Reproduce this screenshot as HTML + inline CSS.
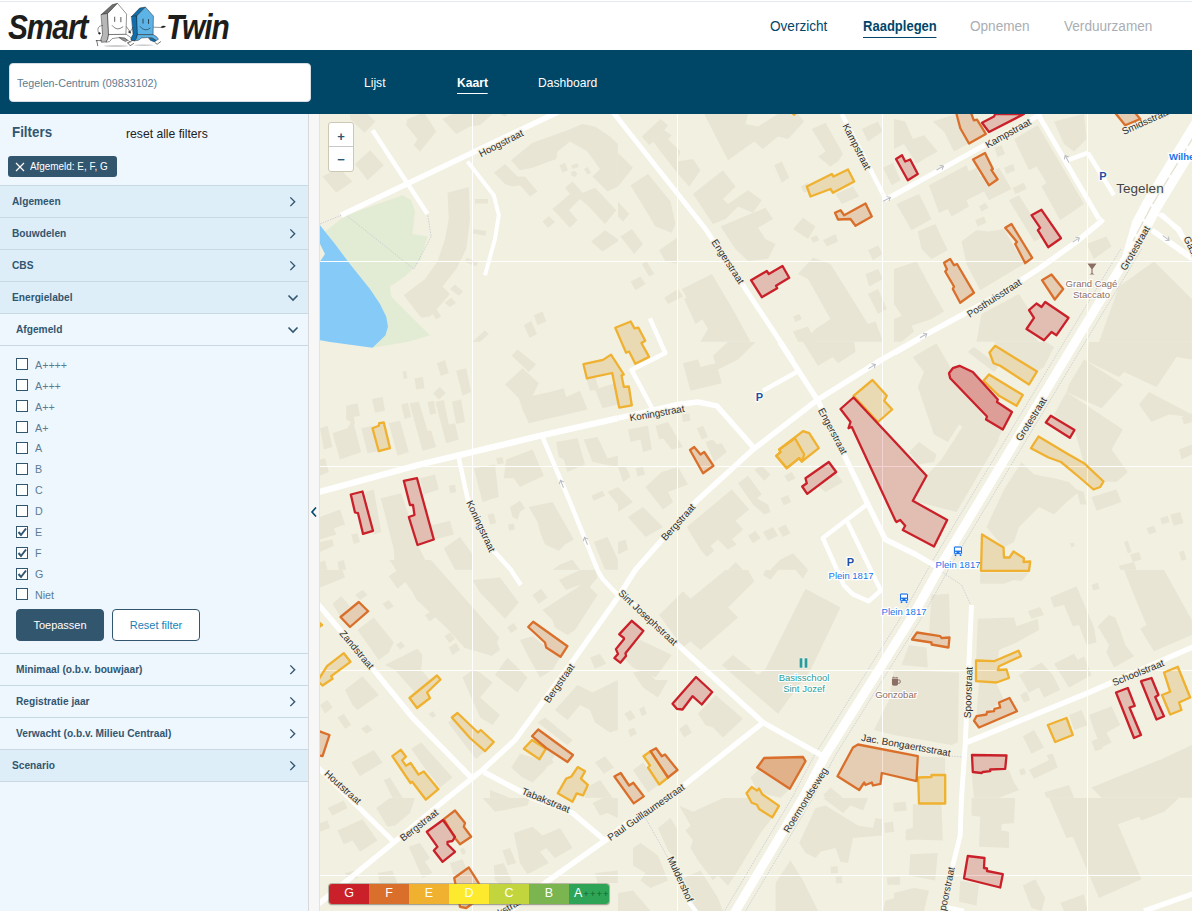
<!DOCTYPE html>
<html lang="nl">
<head>
<meta charset="utf-8">
<title>Smart Twin</title>
<style>
*{box-sizing:border-box;margin:0;padding:0}
html,body{width:1192px;height:911px;overflow:hidden;background:#fff;font-family:"Liberation Sans",sans-serif;color:#33566f}
#top{position:absolute;left:0;top:0;width:1192px;height:50px;background:linear-gradient(to bottom,#fff 0,#fff 1px,#e3eaf2 1px,#e3eaf2 2px,#fff 2px)}
#logo{position:absolute;left:8px;top:5px;height:46px;width:230px}
#logo span{position:absolute;top:2.5px;font-size:34.5px;font-weight:bold;font-style:italic;color:#1d1d1b;letter-spacing:-1.2px;transform-origin:0 50%;transform:scaleX(.865);white-space:nowrap}
#nav a{position:absolute;top:18px;font-size:14px;color:#00466a;white-space:nowrap;transform-origin:0 50%;transform:scaleX(.97)}
#nav a.act{font-weight:bold;border-bottom:1.5px solid #00466a;padding-bottom:3px;transform:scaleX(.93)}
#nav a.dis{color:#aaaeb3}
#bar{position:absolute;left:0;top:50px;width:1192px;height:64px;background:#004666}
#search{position:absolute;left:9px;top:12.5px;width:302px;height:39px;background:#fff;border-radius:4px;border:1px solid #d5dde3;font-size:11px;color:#5c7c92;line-height:38px;padding-left:8px}
#search span{display:inline-block;transform-origin:0 50%;transform:scaleX(.975);margin-left:-1px}
#tabs a{position:absolute;top:25px;font-size:13px;color:#fff;white-space:nowrap;transform-origin:0 50%;transform:scaleX(.93)}
#tabs a.act{font-weight:bold;border-bottom:1.5px solid #fff;padding-bottom:2.5px}
#side{position:absolute;left:0;top:114px;width:309px;height:797px;background:#eef6fe;border-right:1px solid #dfe3e6}
#grip{position:absolute;left:308px;top:114px;width:12px;height:797px;background:#f7f7f7;border-left:1px solid #d6d8da;border-right:1px solid #e3e3e0}
#fh{position:absolute;left:12px;top:9px;font-size:15px;font-weight:bold;color:#33566f;transform-origin:0 50%;transform:scaleX(.89)}
#ra{position:absolute;left:126px;top:12px;font-size:13.5px;color:#222;transform-origin:0 50%;transform:scaleX(.9);white-space:nowrap}
#chip{position:absolute;left:8px;top:42px;width:109px;height:21px;background:#33566f;border-radius:3px;color:#fff;font-size:11px;line-height:21px;white-space:nowrap}
#chip span{position:absolute;left:22px;top:0;transform-origin:0 50%;transform:scaleX(.9)}
.row{position:absolute;left:0;width:308px;height:32px;border-top:1px solid #c9d9e4;font-size:11.5px;font-weight:bold;color:#33566f;line-height:31px;padding-left:12px;background:#deeef9}
.row.sub{background:#eef6fe;padding-left:16px}
.row b{display:inline-block;transform-origin:0 50%;transform:scaleX(.885);white-space:nowrap}
.row svg{position:absolute;right:12px;top:10px}
.cb{position:absolute;left:16px;width:12px;height:12px;border:1px solid #33566f;background:#fff}
.cl{position:absolute;left:35px;font-size:11.5px;color:#5c7c92;line-height:14px;transform-origin:0 50%;transform:scaleX(.93)}
.btn{position:absolute;top:495px;height:32px;width:88px;border-radius:4px;font-size:11px;line-height:30px;text-align:center;border:1px solid #33566f}
#map{position:absolute;left:320px;top:114px;width:872px;height:797px;background:#f2efe0;overflow:hidden}
#zoom{position:absolute;left:8px;top:8px;width:26px;height:50px;background:#fff;border:1px solid #cdc8b6;border-radius:3px;color:#33566f;font-size:13px;font-weight:bold;text-align:center}
#zoom div{height:24px;line-height:25px}
#legend{position:absolute;left:9px;top:770px;width:280px;height:20px;border-radius:3px;overflow:hidden;box-shadow:0 0 0 1px rgba(130,130,115,.5),0 1px 2px rgba(0,0,0,.25)}
#legend div{float:left;width:40px;height:20px;color:#fff;font-size:12.5px;line-height:19px;text-align:center}
</style>
</head>
<body>
<div id="top">
  <div id="logo">
    <span style="left:0">Smart</span>
    <span style="left:157.5px">Twin</span>
    <!--LOGO--><svg style="position:absolute;left:82px;top:-5px" width="80" height="52" viewBox="0 0 1192 775">
<ellipse cx="390" cy="685" rx="185" ry="11" fill="#888" opacity=".55"/><ellipse cx="800" cy="672" rx="150" ry="9" fill="#888" opacity=".55"/>
<g stroke="#1d1d1b" stroke-width="7" stroke-linejoin="round" stroke-linecap="round">
<polygon points="170,215 330,70 410,50 265,200" fill="#6f6f6f"/>
<polygon points="170,215 265,200 280,515 265,580 240,625 170,630 160,590 185,520" fill="#b7b7b7"/>
<polygon points="280,515 535,510 590,545 640,600 600,625 560,600 520,570 440,560 330,575 290,620 240,630 265,580" fill="#fff"/>
<polygon points="265,200 410,50 545,210 535,510 280,515" fill="#fff"/>
<polygon points="440,562 520,570 560,600 530,620 490,600" fill="#9a9a9a"/>
<path d="M368,255V320M460,260V325" stroke-width="11" fill="none"/>
<path d="M330,380Q400,475 490,400" fill="none" stroke-width="8"/>
<path d="M185,380C120,380 100,440 130,490" fill="none"/><circle cx="140" cy="497" r="13" fill="#1d1d1b"/>
<path d="M545,400L600,480" fill="none"/><path d="M575,480l30,15l-10,-30z" fill="#1d1d1b"/>
<path d="M92,605H165M100,605L115,682" fill="none" stroke-width="9"/>
<path d="M565,640L598,682L650,648" fill="none" stroke-width="9"/>
<polygon points="620,245 740,120 825,105 700,235" fill="#0f6fae"/>
<polygon points="620,245 700,235 710,515 690,580 660,610 610,600 615,560 640,515" fill="#0f6fae"/>
<polygon points="710,515 940,515 990,545 1020,585 985,605 930,570 860,560 770,565 720,600 660,610 690,580" fill="#5db3e6"/>
<polygon points="880,565 930,570 985,605 960,625 900,600" fill="#0f6fae"/>
<polygon points="700,235 825,105 945,240 940,515 710,515" fill="#5db3e6"/>
<path d="M790,285V345M872,290V350" stroke-width="11" fill="none"/>
<path d="M745,395Q820,485 895,420" fill="none" stroke-width="8"/>
<path d="M950,405L1060,410" fill="none"/><ellipse cx="1090" cy="400" rx="30" ry="11" fill="#1d1d1b" transform="rotate(-12 1090 400)"/>
<path d="M640,410L600,470" fill="none"/>
<path d="M975,640L1000,660L1052,622" fill="none" stroke-width="9"/>
<path d="M600,625L560,640" fill="none" stroke-width="9"/>
</g></svg>
<!--/LOGO-->
  </div>
  <div id="nav">
    <a style="left:770px">Overzicht</a>
    <a class="act" style="left:863px">Raadplegen</a>
    <a class="dis" style="left:970px">Opnemen</a>
    <a class="dis" style="left:1064px">Verduurzamen</a>
  </div>
</div>
<div id="bar">
  <div id="search"><span>Tegelen-Centrum (09833102)</span></div>
  <div id="tabs">
    <a style="left:364px">Lijst</a>
    <a class="act" style="left:457px">Kaart</a>
    <a style="left:538px">Dashboard</a>
  </div>
</div>
<div id="side">
  <div id="fh">Filters</div>
  <div id="ra">reset alle filters</div>
  <div id="chip"><svg width="10" height="10" viewBox="0 0 10 10" style="position:absolute;left:7px;top:6px"><path d="M1 1L9 9M9 1L1 9" stroke="#fff" stroke-width="1.2" fill="none"/></svg><span>Afgemeld: E, F, G</span></div>
  <!--ROWS-->
<div class="row" style="top:71px"><b>Algemeen</b><svg width="7" height="11.5" viewBox="0 0 8 13"><path d="M1.5 1.5L6.5 6.5L1.5 11.5" stroke="#33566f" stroke-width="1.6" fill="none"/></svg></div>
<div class="row" style="top:103px"><b>Bouwdelen</b><svg width="7" height="11.5" viewBox="0 0 8 13"><path d="M1.5 1.5L6.5 6.5L1.5 11.5" stroke="#33566f" stroke-width="1.6" fill="none"/></svg></div>
<div class="row" style="top:135px"><b>CBS</b><svg width="7" height="11.5" viewBox="0 0 8 13"><path d="M1.5 1.5L6.5 6.5L1.5 11.5" stroke="#33566f" stroke-width="1.6" fill="none"/></svg></div>
<div class="row" style="top:167px"><b>Energielabel</b><svg width="12" height="8" viewBox="0 0 12 8" style="top:12px;right:9px"><path d="M1.5 1.5L6 6L10.5 1.5" stroke="#33566f" stroke-width="1.6" fill="none"/></svg></div>
<div class="row sub" style="top:199px"><b>Afgemeld</b><svg width="12" height="8" viewBox="0 0 12 8" style="top:12px;right:9px"><path d="M1.5 1.5L6 6L10.5 1.5" stroke="#33566f" stroke-width="1.6" fill="none"/></svg></div>
<div class="row sub" style="top:539px"><b>Minimaal (o.b.v. bouwjaar)</b><svg width="7" height="11.5" viewBox="0 0 8 13"><path d="M1.5 1.5L6.5 6.5L1.5 11.5" stroke="#33566f" stroke-width="1.6" fill="none"/></svg></div>
<div class="row sub" style="top:571px"><b>Registratie jaar</b><svg width="7" height="11.5" viewBox="0 0 8 13"><path d="M1.5 1.5L6.5 6.5L1.5 11.5" stroke="#33566f" stroke-width="1.6" fill="none"/></svg></div>
<div class="row sub" style="top:603px"><b>Verwacht (o.b.v. Milieu Centraal)</b><svg width="7" height="11.5" viewBox="0 0 8 13"><path d="M1.5 1.5L6.5 6.5L1.5 11.5" stroke="#33566f" stroke-width="1.6" fill="none"/></svg></div>
<div class="row" style="top:635px"><b>Scenario</b><svg width="7" height="11.5" viewBox="0 0 8 13"><path d="M1.5 1.5L6.5 6.5L1.5 11.5" stroke="#33566f" stroke-width="1.6" fill="none"/></svg></div>
<div style="position:absolute;left:0;top:231px;width:308px;height:1px;background:#c9d9e4"></div>
<div style="position:absolute;left:0;top:667px;width:308px;height:1px;background:#c9d9e4"></div>
<div class="cb" style="top:244.2px"></div><div class="cl" style="top:243.7px">A++++</div>
<div class="cb" style="top:265.1px"></div><div class="cl" style="top:264.6px">A+++</div>
<div class="cb" style="top:286.1px"></div><div class="cl" style="top:285.6px">A++</div>
<div class="cb" style="top:307.0px"></div><div class="cl" style="top:306.5px">A+</div>
<div class="cb" style="top:327.9px"></div><div class="cl" style="top:327.4px">A</div>
<div class="cb" style="top:348.9px"></div><div class="cl" style="top:348.4px">B</div>
<div class="cb" style="top:369.8px"></div><div class="cl" style="top:369.3px">C</div>
<div class="cb" style="top:390.7px"></div><div class="cl" style="top:390.2px">D</div>
<div class="cb" style="top:411.6px"><svg width="10" height="10" viewBox="0 0 10 10" style="position:absolute;left:0;top:0"><path d="M1.5 5L4 8L9 1.5" stroke="#33566f" stroke-width="2" fill="none"/></svg></div><div class="cl" style="top:411.1px">E</div>
<div class="cb" style="top:432.6px"><svg width="10" height="10" viewBox="0 0 10 10" style="position:absolute;left:0;top:0"><path d="M1.5 5L4 8L9 1.5" stroke="#33566f" stroke-width="2" fill="none"/></svg></div><div class="cl" style="top:432.1px">F</div>
<div class="cb" style="top:453.5px"><svg width="10" height="10" viewBox="0 0 10 10" style="position:absolute;left:0;top:0"><path d="M1.5 5L4 8L9 1.5" stroke="#33566f" stroke-width="2" fill="none"/></svg></div><div class="cl" style="top:453.0px">G</div>
<div class="cb" style="top:474.4px"></div><div class="cl" style="top:473.9px">Niet</div>
<div class="btn" style="left:16px;background:#33566f;color:#fff">Toepassen</div>
<div class="btn" style="left:112px;background:#fff;color:#1a7fb5">Reset filter</div>
<!--/ROWS-->
</div>
<div id="grip"><svg width="8" height="12" viewBox="0 0 8 12" style="position:absolute;left:1px;top:392px"><path d="M6 1.5L2 6L6 10.5" stroke="#00466a" stroke-width="1.6" fill="none"/></svg></div>
<div id="map">
<!--MAP-->
<svg id="mapsvg" width="872" height="797" viewBox="0 0 872 797" style="position:absolute;left:0;top:0;font-family:'Liberation Sans',sans-serif">
<rect width="872" height="797" fill="#f2f0e0"/>
<g fill="#e2ecd4"><polygon points="5.0,117.5 26.2,101.2 82.5,81.2 91.2,86.2 95.0,97.5 92.5,120.0 107.5,122.5 100.0,147.5 85.0,162.5 70.0,172.5 71.2,182.5 110.0,221.2 87.5,228.0 52.5,233.8 68.0,212.5 50.0,175.0"/></g>
<g fill="#86cbf8"><polygon points="0.0,111.2 15.0,130.0 30.0,150.0 50.0,175.0 60.0,190.0 66.2,202.5 68.0,212.5 65.5,221.2 58.8,227.8 52.5,233.8 10.0,228.0 0.0,226.2 0.0,147.5 5.0,140.0 0.0,130.0"/></g>
<g fill="#e8e5d5"><polygon points="30.0,0.0 47.5,0.0 55.5,7.5 44.5,18.8 30.0,5.0"/><polygon points="87.5,5.0 100.0,0.0 105.0,0.0 116.2,17.5 100.0,37.5 93.8,31.2 97.5,25.0 86.2,11.2"/><polygon points="122.5,5.0 132.5,0.0 172.5,0.0 160.0,11.2 150.0,12.5 136.2,20.0"/><polygon points="35.0,50.0 50.0,36.2 63.8,51.2 47.5,66.2"/><polygon points="2.5,62.5 18.8,53.8 32.5,67.5 16.2,78.8"/><polygon points="191.2,46.2 212.5,28.8 247.5,16.2 262.5,10.0 275.0,12.5 290.0,22.5 297.8,30.0 297.8,72.5 287.5,77.5 272.5,62.5 280.0,55.0 267.5,37.5 250.0,27.5 237.5,37.5 236.2,45.0 212.5,53.8 200.0,56.2"/><polygon points="173.8,58.8 185.0,50.0 197.5,62.5 205.0,62.5 217.5,77.5 210.0,82.5 200.0,71.2 192.5,72.5 185.0,70.0"/><polygon points="232.5,95.0 250.0,80.0 245.0,73.8 252.5,67.5 262.5,78.8 275.0,73.8 296.2,96.2 285.0,110.0 268.8,92.5 260.0,85.0 248.8,96.2 257.5,106.2 250.0,113.8"/><polygon points="271.2,127.5 285.0,116.2 297.8,125.0 297.8,127.5 282.5,137.5"/><polygon points="222.5,107.5 228.8,102.0 235.0,108.0 228.0,113.8"/><polygon points="239.5,51.2 245.0,48.8 248.0,56.2 242.5,58.8"/><polygon points="251.2,51.2 257.5,49.2 258.8,53.0 252.5,55.0"/><polygon points="251.2,58.0 255.0,57.0 257.5,60.0 255.0,63.0 251.5,62.0"/><polygon points="263.8,55.0 267.5,53.0 271.2,58.8 267.5,60.5"/><polygon points="127.5,78.8 148.8,73.0 150.0,105.0 146.2,135.0 136.2,155.0 122.5,172.5 130.0,180.0 110.0,202.5 101.2,203.8 83.8,181.2 105.0,165.0 117.5,147.5 125.0,125.0 128.8,105.0"/><polygon points="155.0,85.0 168.0,85.0 168.0,89.5 155.0,89.5"/><polygon points="153.8,115.0 166.2,117.0 165.5,121.8 153.0,119.5"/><polygon points="146.2,143.8 158.0,148.0 156.5,152.5 145.0,148.0"/><polygon points="130.0,175.0 135.0,170.5 143.0,177.5 138.8,181.8"/><polygon points="124.5,188.8 131.2,183.8 136.2,188.8 130.0,193.0"/><polygon points="110.0,196.2 115.0,193.0 121.2,202.5 116.2,205.5"/><polygon points="213.8,201.2 222.5,197.5 226.2,207.5 217.5,211.2"/><polygon points="203.8,211.2 211.2,207.0 217.0,220.0 209.5,223.8"/><polygon points="152.5,227.8 165.0,216.2 168.8,220.0 160.0,227.8"/><polygon points="180.0,0.0 187.5,0.0 185.0,3.0"/><polygon points="321.8,22.5 340.5,5.0 348.0,11.2 344.2,16.2 351.8,21.2 345.5,27.5 339.2,22.5 329.2,31.2"/><polygon points="333.0,27.5 343.0,20.0 360.5,37.5 356.8,47.5 373.0,45.0 380.5,56.2 369.2,72.5 358.0,60.0"/><polygon points="310.5,71.2 328.0,60.0 350.5,87.5 355.5,110.0 351.8,118.8 335.5,112.5 328.0,100.0"/><polygon points="298.0,38.8 313.0,53.8 298.0,72.5"/><polygon points="298.0,87.5 309.2,100.0 303.0,107.5 298.0,102.5"/><polygon points="300.5,122.5 311.8,115.0 323.0,130.0 314.2,140.0"/><polygon points="339.2,136.2 356.8,123.8 358.0,150.0 345.5,147.5"/><polygon points="384.2,0.0 428.0,0.0 425.5,10.0 438.0,12.5 458.0,0.0 478.0,0.0 484.2,7.5 468.0,25.0 458.0,22.5 443.0,35.0 434.2,27.5 408.0,46.2"/><polygon points="491.8,15.0 505.5,8.8 523.0,40.0 518.0,47.5 510.5,52.5 498.0,42.5 505.5,37.5"/><polygon points="454.2,51.2 461.8,47.5 469.2,63.8 461.8,68.8"/><polygon points="373.0,80.0 403.0,56.2 415.5,72.5 403.0,85.0 408.0,90.0 428.0,76.2 441.8,86.2 433.0,98.8 418.0,92.5 405.5,105.0 393.0,110.0"/><polygon points="400.5,112.5 433.0,98.8 445.5,93.8 453.0,105.0 438.0,113.8 445.5,125.0 455.5,130.0 448.0,145.0 428.0,147.0 415.5,135.0"/><polygon points="473.0,115.0 483.0,103.8 495.5,112.5 488.0,125.0"/><polygon points="503.0,126.2 515.5,120.0 518.0,127.5 506.8,132.5"/><polygon points="490.5,123.8 496.8,121.2 499.2,126.2 493.0,128.8"/><polygon points="361.8,175.0 391.8,160.0 415.5,200.0 430.5,227.8 380.5,227.8 388.0,215.0 378.0,197.5 370.5,190.0"/><polygon points="478.0,160.0 493.0,143.8 510.5,150.0 548.0,210.0 555.5,207.5 563.0,227.8 483.0,227.8 495.5,215.0 510.5,205.0 488.0,165.0"/><polygon points="548.0,136.2 558.0,131.2 562.5,140.0 553.0,146.2"/><polygon points="541.8,15.0 558.0,7.5 562.5,17.5 548.0,27.5"/><polygon points="563.0,53.8 573.0,48.8 580.5,66.2 571.8,71.2"/><polygon points="515.5,80.0 533.0,72.5 539.2,82.5 521.8,90.0"/><polygon points="545.5,160.0 558.0,155.0 563.0,165.0 549.2,172.5"/><polygon points="548.0,180.0 558.0,175.0 566.8,195.0 558.0,200.0"/><polygon points="310.5,167.5 320.5,162.5 325.5,170.0 315.5,176.2"/><polygon points="321.8,150.0 326.8,147.5 334.2,160.0 329.2,162.5"/><polygon points="344.2,183.8 358.0,175.0 363.0,182.5 348.0,190.0"/><polygon points="364.2,185.0 370.5,181.2 383.0,205.0 375.5,210.0"/><polygon points="473.0,202.5 479.2,200.0 481.8,205.0 475.5,208.0"/><polygon points="473.0,217.5 488.0,212.5 495.5,227.8 478.0,227.8"/><polygon points="480.5,72.5 488.0,68.8 491.8,75.0 484.2,78.8"/><polygon points="574.0,5.0 585.2,7.5 592.8,25.0 604.0,21.2 617.8,37.5 604.0,45.0 596.5,50.0 584.0,30.0 574.0,35.0"/><polygon points="612.8,7.5 636.5,0.0 640.2,13.8 649.0,29.5 634.0,37.5 624.0,17.5"/><polygon points="694.0,25.0 717.8,11.2 764.0,90.0 740.2,106.2 721.5,72.5 726.5,68.8 716.5,52.5 709.0,56.2"/><polygon points="674.0,33.8 681.5,31.2 685.2,40.0 677.8,43.0"/><polygon points="684.0,53.8 692.8,50.0 695.2,56.2 686.5,60.0"/><polygon points="692.8,73.8 704.0,68.8 706.5,75.0 695.2,80.0"/><polygon points="609.0,71.2 646.5,51.2 649.0,57.5 656.5,53.8 660.2,62.5 679.0,53.8 691.5,75.0 669.0,86.2 664.0,77.5 646.5,86.2 649.0,92.5 631.5,102.5 627.8,95.0 619.0,98.8"/><polygon points="659.0,92.5 665.2,88.8 668.5,93.8 661.5,97.5"/><polygon points="655.2,106.2 664.0,102.5 666.5,108.8 657.8,112.5"/><polygon points="576.5,90.0 599.0,80.0 611.5,105.0 591.5,116.2"/><polygon points="597.8,117.5 615.2,110.0 627.8,136.2 611.5,145.0 601.5,135.0"/><polygon points="641.5,127.5 656.5,116.2 669.0,117.5 684.0,115.0 704.0,150.0 660.2,176.2 646.5,150.0"/><polygon points="689.0,86.2 699.0,81.2 714.0,105.0 724.0,122.5 714.0,127.5"/><polygon points="574.0,155.0 596.5,147.5 614.0,180.0 624.0,197.5 611.5,205.0 589.0,212.5 574.0,190.0"/><polygon points="734.0,7.5 764.0,0.0 766.5,25.0 754.0,37.5 744.0,30.0"/><polygon points="766.5,130.0 786.5,122.5 791.5,132.5 774.0,145.0"/><polygon points="799.0,172.5 834.0,147.5 871.8,185.0 871.8,227.8 779.0,227.8"/><polygon points="661.5,200.0 699.0,180.0 714.0,203.8 706.5,215.0 719.0,227.8 656.5,227.8"/><polygon points="574.0,205.0 586.5,200.0 594.0,217.5 581.5,227.8 574.0,227.8"/><polygon points="116.8,249.2 125.0,246.0 128.8,259.2 120.8,261.8"/><polygon points="82.5,258.0 86.2,256.8 87.5,264.2 83.8,265.0"/><polygon points="94.5,264.2 103.0,263.0 104.5,274.2 96.2,275.5"/><polygon points="113.0,279.2 120.0,273.0 125.8,279.2 118.8,285.5"/><polygon points="136.2,256.8 146.2,254.2 151.2,278.0 142.5,281.8"/><polygon points="52.0,285.0 62.5,283.0 65.0,296.8 55.0,298.8"/><polygon points="26.2,291.8 37.5,289.2 40.0,301.8 33.8,303.0 35.0,310.5 26.2,305.5"/><polygon points="81.2,290.5 88.0,288.8 91.2,303.0 84.5,305.0"/><polygon points="89.5,289.2 98.8,287.5 107.5,316.8 111.2,316.8 116.2,333.0 102.5,336.8"/><polygon points="107.5,288.0 113.8,286.8 116.2,299.2 110.0,301.0"/><polygon points="115.5,288.0 123.8,286.0 128.8,310.5 135.0,309.2 138.8,325.5 126.2,329.2"/><polygon points="132.0,287.5 141.2,285.5 145.0,308.0 136.2,310.0"/><polygon points="0.0,314.2 7.5,311.8 12.5,333.0 3.8,335.5"/><polygon points="12.5,319.2 27.5,314.2 32.5,305.5 41.2,338.0 20.0,345.5"/><polygon points="41.2,314.2 52.5,311.8 58.8,337.2 47.5,339.2"/><polygon points="68.8,309.2 80.0,306.8 88.8,338.0 77.5,341.8"/><polygon points="0.0,345.5 5.0,344.2 8.8,358.0 0.0,361.8"/><polygon points="191.8,241.8 197.5,235.5 216.2,250.5 208.8,258.0"/><polygon points="185.0,270.5 202.5,254.2 218.8,269.2 212.5,281.8 230.0,278.0 243.8,274.2 246.2,283.0 260.0,276.8 267.5,295.5 208.8,309.2 202.5,295.5 198.8,284.2"/><polygon points="266.2,264.2 275.0,261.8 278.8,275.5 270.0,276.8"/><polygon points="275.0,275.5 295.0,269.2 297.8,290.5 282.5,294.2"/><polygon points="236.2,328.0 257.5,324.2 265.0,350.5 247.5,358.0 243.8,345.5 238.8,343.0"/><polygon points="263.8,325.5 277.5,323.0 287.5,344.2 297.8,341.8 297.8,353.0 272.5,348.0"/><polygon points="176.2,344.2 182.5,343.0 183.8,349.2 177.5,350.5"/><polygon points="186.2,345.5 212.5,335.5 223.8,361.8 200.0,373.0 193.8,364.2 183.8,364.2"/><polygon points="153.8,354.2 175.0,350.5 178.8,383.0 162.5,388.0"/><polygon points="100.0,364.2 115.0,360.5 118.8,375.5 103.8,380.5"/><polygon points="128.8,371.8 135.0,370.5 136.2,378.0 130.0,379.2"/><polygon points="45.0,378.0 53.8,375.5 61.2,418.0 53.8,420.5"/><polygon points="60.8,384.2 81.2,379.2 100.0,435.5 110.0,455.8 75.0,455.8 73.8,435.5"/><polygon points="110.0,411.8 130.0,406.8 133.8,420.5 115.0,425.5"/><polygon points="0.0,403.0 20.0,395.5 25.0,410.5 13.8,414.2 16.2,420.5 0.0,425.5"/><polygon points="0.0,428.0 12.5,425.5 13.8,431.8 0.0,438.0"/><polygon points="31.2,420.5 37.5,419.2 40.0,428.0 33.8,430.0"/><polygon points="17.5,448.0 23.8,446.0 26.2,455.8 18.8,455.8"/><polygon points="0.0,448.0 5.0,446.8 7.5,455.8 0.0,455.8"/><polygon points="123.8,434.2 140.0,423.0 152.5,440.5 152.5,455.8 135.0,455.8"/><polygon points="190.0,393.0 200.0,386.8 205.0,394.2 200.0,398.0 197.5,405.5 192.5,403.0"/><polygon points="208.8,393.0 232.5,388.0 253.8,425.5 245.0,430.5 238.8,436.8 225.0,430.5 220.0,418.0 217.5,408.0"/><polygon points="167.5,400.5 173.8,399.2 176.2,409.2 170.0,410.5"/><polygon points="188.0,410.5 193.8,409.2 195.0,415.5 189.2,416.8"/><polygon points="271.2,381.8 282.5,376.8 285.0,381.8 273.8,386.8"/><polygon points="287.5,378.0 297.8,373.0 297.8,390.5"/><polygon points="273.8,428.0 287.5,423.0 297.8,445.5 297.8,455.8 285.0,455.8"/><polygon points="232.5,455.8 240.0,450.5 252.5,445.5 260.0,455.8"/><polygon points="363.0,249.2 378.0,245.5 380.5,253.0 395.5,249.2 393.0,241.8 408.0,228.0 435.5,228.0 418.0,245.5 398.0,255.5 401.8,269.2 370.5,276.8"/><polygon points="483.0,228.0 534.2,228.0 535.5,238.0 518.0,249.2 513.0,243.0 498.0,251.8"/><polygon points="308.0,315.5 328.0,311.8 331.8,335.5 323.0,338.0 320.5,325.5 310.5,328.0"/><polygon points="335.5,311.8 348.0,308.0 356.8,323.0 363.0,333.0 351.8,335.5 343.0,324.2 339.2,325.5"/><polygon points="361.8,300.5 369.2,299.2 370.5,306.8 363.0,308.0"/><polygon points="376.8,314.2 383.0,311.8 388.0,323.0 381.8,325.5"/><polygon points="385.5,328.0 393.0,325.5 396.8,330.5 401.8,329.2 406.8,338.0 394.2,348.0"/><polygon points="298.0,353.0 305.5,351.8 310.5,363.0 303.0,368.0"/><polygon points="315.5,354.2 323.0,353.0 325.0,360.5 317.5,362.5"/><polygon points="341.8,358.0 358.0,353.0 368.0,370.5 348.0,378.0 353.0,388.0 343.0,395.5 325.5,373.0"/><polygon points="298.0,373.0 313.0,388.0 298.0,398.0"/><polygon points="308.0,403.0 323.0,393.0 343.0,413.0 325.5,423.0"/><polygon points="434.2,355.5 441.8,351.8 450.5,360.5 444.2,366.8"/><polygon points="418.0,369.2 428.0,361.8 441.8,380.5 436.8,384.2 448.0,390.5 450.5,398.0 444.2,400.5 433.0,390.5"/><polygon points="464.2,361.8 471.8,358.0 475.5,364.2 468.0,368.0"/><polygon points="460.5,384.2 468.0,381.0 471.2,388.0 463.8,391.2"/><polygon points="495.5,370.5 515.5,358.0 523.0,368.0 505.5,378.0"/><polygon points="366.8,413.0 411.8,375.5 429.2,395.5 415.5,406.8 423.0,415.5 411.8,425.5 416.8,430.5 408.0,435.5 398.0,425.5 390.5,431.8 394.2,436.8 386.8,443.0 380.5,435.5"/><polygon points="428.0,421.8 435.5,416.8 440.5,424.2 433.0,429.2"/><polygon points="443.0,418.0 453.0,413.0 458.0,421.8 448.0,426.8"/><polygon points="458.0,414.2 465.5,410.5 470.5,419.2 463.0,423.0"/><polygon points="408.0,455.8 415.5,448.0 423.0,455.8"/><polygon points="450.5,455.8 460.5,445.5 473.0,439.2 488.0,455.8"/><polygon points="298.0,428.0 305.5,425.5 308.0,435.5 298.0,440.5"/><polygon points="592.8,243.0 616.5,229.2 631.5,255.5 664.0,303.0 682.8,315.5 674.0,333.0 639.0,310.5 627.8,328.0 614.0,320.5 597.8,273.0 604.0,258.0"/><polygon points="647.8,238.0 654.0,233.0 679.0,251.8 674.0,258.0"/><polygon points="589.0,338.0 599.0,328.0 616.5,340.5 614.0,348.0 599.0,350.5"/><polygon points="621.5,345.5 644.0,310.5 679.0,325.5 636.5,398.0 592.8,386.8 606.5,361.8"/><polygon points="674.0,228.0 726.5,228.0 734.0,233.0 724.0,253.0 717.0,257.5 679.0,233.0"/><polygon points="769.0,228.0 871.8,228.0 871.8,245.5 856.5,243.0 836.5,273.0 804.0,258.0 799.0,263.0 766.5,246.8"/><polygon points="749.0,270.5 764.0,245.5 802.8,270.5 781.5,294.2 746.5,278.0"/><polygon points="819.0,290.5 829.0,278.0 871.8,300.5 871.8,303.0 849.0,300.5 831.5,308.0"/><polygon points="861.5,303.0 871.8,299.2 871.8,308.0 864.0,310.5"/><polygon points="859.0,335.5 871.8,330.5 871.8,340.5 861.5,345.5"/><polygon points="734.0,300.5 746.5,278.0 802.8,315.5 791.5,335.5 807.8,358.0 796.5,368.0 783.5,367.5 764.0,349.2 754.5,316.0"/><polygon points="684.0,375.5 701.5,348.0 714.0,360.5 734.0,364.2 749.0,368.0 759.0,378.0 746.5,388.0 734.0,400.5 719.0,393.0 709.0,403.0 699.0,413.0 694.0,428.0 683.5,433.5 666.5,413.0"/><polygon points="771.5,383.0 796.5,375.5 801.5,388.0 776.5,396.8"/><polygon points="756.5,375.5 764.0,378.0 766.5,390.5 760.2,390.5"/><polygon points="840.2,404.2 847.8,401.8 849.5,408.0 842.0,410.5"/><polygon points="850.2,400.5 860.2,398.0 863.5,409.2 853.5,411.8"/><polygon points="826.5,414.2 834.0,411.8 836.5,418.0 829.0,420.5"/><polygon points="804.0,428.0 807.8,426.8 811.5,438.0 807.8,439.2"/><polygon points="810.2,440.5 819.0,438.0 821.5,445.5 812.8,448.0"/><polygon points="859.0,438.0 864.0,436.8 866.5,445.5 861.5,446.8"/><polygon points="799.0,451.8 814.0,448.0 816.5,455.8 800.2,455.8"/><polygon points="750.2,429.2 754.0,428.5 754.5,432.5 751.0,433.0"/><polygon points="0.0,456.0 22.5,456.0 25.0,463.5 0.0,473.5"/><polygon points="68.8,462.2 77.5,456.0 86.2,467.2 77.5,474.8"/><polygon points="69.2,446.0 111.0,446.0 179.2,523.5 171.0,541.5 144.8,534.0 125.8,513.0 96.5,485.8 92.2,477.5"/><polygon points="62.5,489.8 68.8,486.0 73.8,492.2 67.5,496.0"/><polygon points="105.0,501.0 111.2,497.2 115.5,503.5 109.2,507.2"/><polygon points="12.5,489.8 21.2,482.2 30.0,492.2 20.5,503.0"/><polygon points="35.0,481.0 42.5,476.0 47.5,481.0 40.0,486.0"/><polygon points="37.5,516.0 53.8,503.5 73.8,528.5 68.8,538.5 58.8,546.0"/><polygon points="76.2,531.0 81.2,527.2 85.0,532.2 80.0,535.5"/><polygon points="124.5,522.2 130.0,518.5 135.0,524.8 129.5,529.0"/><polygon points="128.8,533.5 136.2,528.5 140.0,536.0 132.5,541.0"/><polygon points="65.0,551.0 97.5,534.8 102.5,541.0 101.2,556.0 110.0,566.0 95.0,578.5 75.0,556.0"/><polygon points="152.5,466.0 180.0,463.5 198.8,488.5 185.0,504.8 160.0,478.5"/><polygon points="212.5,481.0 221.2,474.8 227.5,483.5 218.8,489.8"/><polygon points="153.8,502.2 175.0,523.5 180.0,536.0 171.2,542.2 153.8,528.5"/><polygon points="187.0,513.5 193.8,509.0 197.5,514.8 191.2,519.0"/><polygon points="238.8,466.0 260.0,456.0 275.0,456.0 277.5,463.5 265.0,478.5 260.0,471.0 246.2,476.0"/><polygon points="222.5,496.0 265.0,468.5 277.5,481.0 255.0,516.0 247.5,521.0 235.0,513.5 232.5,506.0"/><polygon points="200.0,526.0 212.5,522.2 240.0,543.5 232.5,556.0 220.0,563.5 207.5,541.0"/><polygon points="270.0,543.5 280.0,539.8 286.2,549.8 275.0,554.8"/><polygon points="175.0,561.0 187.5,543.5 207.5,563.5 197.5,578.5"/><polygon points="142.5,563.5 152.5,556.0 160.0,558.5 172.5,568.5 160.0,583.5 180.0,601.0 172.5,611.0 160.0,603.5"/><polygon points="235.0,596.0 257.5,571.0 272.5,578.5 297.8,566.0 297.8,616.0 290.0,618.5 275.0,608.5 270.0,596.0 260.0,591.0 247.5,606.0"/><polygon points="275.0,648.5 285.0,642.2 293.8,653.5 283.8,659.8"/><polygon points="217.5,608.5 225.0,603.5 252.5,626.0 247.5,631.0"/><polygon points="191.2,653.5 200.0,639.8 219.5,645.2 225.8,634.8 235.0,641.0 225.0,656.0 212.5,668.5 202.5,663.5"/><polygon points="223.8,646.0 230.0,643.5 233.8,648.5 227.5,652.2"/><polygon points="25.0,576.0 42.5,562.2 58.8,581.0 37.5,596.0 32.5,591.0"/><polygon points="0.0,591.0 7.5,586.0 12.5,593.5 5.0,599.8"/><polygon points="17.5,603.5 23.8,599.8 31.2,611.0 25.0,614.8"/><polygon points="41.2,614.8 47.5,610.5 52.5,616.0 46.2,619.8"/><polygon points="31.2,648.5 53.8,636.0 62.5,648.5 40.0,662.2"/><polygon points="91.2,634.8 101.2,628.5 132.5,663.5 120.0,673.5 106.2,656.0"/><polygon points="128.0,608.5 135.0,603.5 165.0,637.2 156.2,644.8 145.0,631.0"/><polygon points="108.8,599.8 113.0,597.2 116.2,601.5 112.0,604.0"/><polygon points="63.8,666.0 70.0,663.5 82.5,683.8 72.5,683.8"/><polygon points="170.0,676.0 190.0,683.8 170.0,683.8"/><polygon points="262.5,676.0 280.0,666.0 292.5,683.8 265.0,683.8"/><polygon points="339.2,501.0 363.0,477.2 370.5,484.8 398.0,462.2 405.5,456.0 428.0,456.0 434.2,467.2 408.0,493.5 418.0,503.5 380.5,536.0 370.5,527.2 363.0,533.5"/><polygon points="445.5,554.8 485.5,474.8 520.5,493.5 490.5,556.0 458.0,599.8 401.8,551.0 413.0,541.0 438.0,561.0"/><polygon points="445.5,456.0 458.0,456.0 450.5,466.0 443.0,461.0"/><polygon points="475.5,456.0 488.0,456.0 483.0,464.8"/><polygon points="298.0,538.5 320.5,526.0 351.8,541.0 335.5,563.5 313.0,553.5"/><polygon points="313.0,558.5 325.5,556.0 335.5,566.0 348.0,566.0 338.0,583.5 323.0,573.5"/><polygon points="304.2,599.8 310.5,596.0 315.5,603.5 309.2,607.2"/><polygon points="319.2,594.8 324.2,592.2 326.8,599.8 321.8,602.2"/><polygon points="308.0,616.0 314.2,613.5 316.8,619.8 310.5,623.0"/><polygon points="378.0,599.8 395.5,581.0 423.0,604.8 403.0,623.5 393.0,613.5 385.5,611.0"/><polygon points="359.2,614.8 366.8,609.8 371.8,618.5 364.2,623.5"/><polygon points="313.0,656.0 323.0,648.5 339.2,670.5 328.0,678.5"/><polygon points="430.5,663.5 438.0,656.0 469.8,674.8 460.5,683.8 438.0,678.5"/><polygon points="503.0,681.0 510.5,673.5 523.0,683.8 505.5,683.8"/><polygon points="660.2,458.5 709.0,458.5 701.5,467.2 694.0,466.0 684.0,469.8 660.2,469.8"/><polygon points="657.8,504.8 694.0,503.5 696.5,512.2 717.8,504.8 719.0,516.0 696.5,528.5 679.0,536.0 677.8,547.2 656.0,546.5"/><polygon points="707.8,497.2 720.2,493.0 724.0,501.0 711.5,504.8"/><polygon points="730.2,483.5 756.5,472.2 774.0,513.5 776.5,528.5 766.5,531.0 759.0,511.0 752.8,512.2 744.0,491.0 734.0,493.5"/><polygon points="771.5,471.0 777.8,468.5 779.5,474.8 773.2,476.5"/><polygon points="777.8,512.2 789.0,501.0 795.2,503.5 800.2,516.0 805.2,531.0 814.0,542.2 794.0,553.5 786.5,538.5 789.0,531.0"/><polygon points="734.0,549.8 754.0,539.8 757.8,546.0 764.0,542.2 771.5,561.0 749.0,573.5"/><polygon points="699.0,561.0 721.5,548.5 732.8,561.0 740.2,576.0 724.0,583.5 719.0,573.5 709.0,578.5"/><polygon points="700.2,581.0 706.5,577.2 710.2,586.0 704.0,588.5"/><polygon points="659.0,568.5 676.5,569.8 684.0,586.0 666.5,598.5 656.5,602.2"/><polygon points="804.0,456.0 844.0,456.0 871.8,506.0 871.8,521.0 834.0,537.2 820.2,514.8 826.5,511.0 814.0,481.0"/><polygon points="611.5,481.0 629.0,479.8 630.2,523.5 609.0,519.8"/><polygon points="589.0,531.0 606.5,533.5 607.8,553.5 581.5,551.0"/><polygon points="574.0,556.0 639.0,558.5 637.8,628.5 631.5,631.0 574.0,621.0 554.0,616.0 569.0,586.0"/><polygon points="599.0,642.2 625.2,643.5 625.2,661.0 599.0,663.0"/><polygon points="702.8,622.2 714.0,616.0 724.0,633.5 711.5,639.8"/><polygon points="749.0,601.0 761.5,596.0 767.8,611.0 754.0,616.0"/><polygon points="769.0,601.0 791.5,592.2 800.2,611.0 786.5,618.5 791.5,628.5 781.5,633.5 774.0,616.0"/><polygon points="771.5,627.2 779.0,624.0 782.8,634.8 775.2,637.2"/><polygon points="651.5,658.5 689.0,656.0 694.0,668.5 699.0,676.0 679.0,683.8 654.0,683.8"/><polygon points="709.0,656.0 729.0,646.0 726.5,641.0 732.8,639.8 737.8,653.5 714.0,664.8"/><polygon points="699.0,656.0 704.0,654.0 706.0,659.8 701.0,661.5"/><polygon points="824.0,653.5 871.8,631.0 871.8,683.8 781.5,683.8 771.5,673.5 839.0,646.0 841.5,651.0"/><polygon points="724.0,678.5 749.0,671.0 754.0,683.8 726.5,683.8"/><polygon points="7.5,694.0 23.8,686.5 27.5,694.0 12.5,701.5"/><polygon points="0.0,709.0 7.5,706.5 10.0,714.0 0.0,717.8"/><polygon points="17.5,716.5 42.5,705.2 57.5,726.5 40.0,737.8 32.5,726.5 23.8,730.2"/><polygon points="56.2,694.0 70.0,684.0 95.0,684.0 90.0,699.0 75.0,711.5 67.5,712.8"/><polygon points="88.8,732.8 100.0,729.0 110.0,744.0 105.0,747.8 112.5,759.0 102.5,764.0"/><polygon points="140.0,735.2 143.8,733.5 146.2,739.0 142.5,741.0"/><polygon points="130.0,749.0 142.5,745.2 146.2,754.0 134.2,764.0"/><polygon points="162.5,684.0 210.0,684.0 207.5,691.5 175.0,697.8"/><polygon points="193.8,719.0 212.5,712.8 222.5,721.5 240.0,714.0 252.5,734.0 235.0,744.0 226.2,734.0 220.0,737.8 228.8,749.0 207.5,760.2 200.0,749.0"/><polygon points="182.5,736.5 190.0,734.0 196.2,749.0 187.5,751.5"/><polygon points="173.8,751.5 183.8,749.0 192.5,769.0 185.0,774.0 175.0,766.5"/><polygon points="272.5,689.0 282.5,684.0 297.8,684.0 297.8,704.0 287.5,699.0 280.0,701.5"/><polygon points="57.5,759.0 72.5,756.5 77.5,769.0 60.0,769.0"/><polygon points="25.0,759.0 35.0,756.5 37.5,764.0 27.5,766.5"/><polygon points="275.0,759.0 297.8,756.5 297.8,769.0 277.5,769.0"/><polygon points="359.2,691.5 373.0,697.8 403.0,684.0 430.5,684.0 438.0,694.0 452.5,703.5 440.5,719.0 418.0,756.5 408.0,771.5 398.0,761.5 393.0,766.5 378.0,746.5 370.5,734.0 373.0,726.5 365.5,716.5 370.5,711.5"/><polygon points="338.0,714.0 350.5,704.0 358.0,716.5 356.8,746.5 348.0,736.5"/><polygon points="313.0,734.0 320.5,729.0 338.0,741.5 348.0,766.5 330.5,774.0 320.5,766.5 325.5,759.0 313.0,751.5"/><polygon points="358.0,766.5 380.5,756.5 398.0,784.0 403.0,797.0 373.0,797.0"/><polygon points="298.0,779.0 313.0,776.5 330.5,797.0 298.0,797.0"/><polygon points="479.2,729.0 495.5,694.0 505.5,691.5 538.0,711.5 553.0,714.0 555.5,704.0 562.5,705.2 562.5,721.5 533.0,724.0 528.0,749.0 520.5,747.8 515.5,734.0 500.5,737.8 495.5,744.0 485.5,739.0"/><polygon points="510.5,752.8 517.5,752.0 518.0,759.0 511.0,759.5"/><polygon points="515.5,762.8 521.8,762.0 522.5,769.0 516.0,769.5"/><polygon points="455.5,769.0 470.5,746.5 483.0,766.5 498.0,797.0 455.5,797.0"/><polygon points="503.0,684.0 548.0,684.0 543.0,696.5 530.5,691.5 523.0,699.0"/><polygon points="573.0,689.0 585.5,687.8 586.8,696.5 574.2,697.8"/><polygon points="564.2,709.0 573.0,707.8 574.2,717.8 565.0,719.0"/><polygon points="585.5,716.5 595.8,715.2 595.8,725.2 586.8,726.5"/><polygon points="566.8,763.5 579.2,762.8 580.0,770.2 567.5,771.0"/><polygon points="565.5,786.5 595.8,779.0 595.8,797.0 563.0,797.0"/><polygon points="592.8,690.2 621.5,690.2 622.8,726.5 585.2,725.2 586.5,715.2 592.8,714.0"/><polygon points="651.5,684.0 695.2,684.0 694.0,709.0 681.5,710.2 681.5,716.5 689.0,717.8 689.0,734.0 659.0,732.8 660.2,702.8 651.5,701.5"/><polygon points="729.0,684.0 859.0,684.0 844.0,697.8 821.5,706.5 819.0,702.8 797.8,710.2 821.5,765.2 779.0,784.0 752.8,722.8 746.5,724.0"/><polygon points="590.2,740.2 617.8,739.0 615.2,766.5 589.0,761.5"/><polygon points="574.0,689.0 585.2,689.0 585.2,696.5 574.0,696.5"/><polygon points="574.0,764.0 580.2,763.5 580.2,770.2 574.0,771.0"/><polygon points="574.0,779.0 594.0,774.0 609.0,776.5 604.0,797.0 574.0,797.0"/><polygon points="640.2,766.5 659.0,770.2 656.5,791.5 639.0,787.8"/><polygon points="702.8,771.5 715.2,765.2 725.2,784.0 721.5,797.0 711.5,794.0"/><polygon points="740.2,789.0 764.0,780.2 767.8,797.0 744.0,797.0"/><polygon points="431.0,166.2 446.8,157.0 448.8,160.0 462.5,152.0 469.2,163.8 456.0,171.8 457.2,174.2 441.8,183.2"/><polygon points="662.0,8.8 674.0,2.5 675.2,0.0 704.0,0.0 669.0,18.0"/><polygon points="576.0,45.0 582.0,41.2 585.2,47.5 590.2,45.5 597.8,60.0 587.8,66.2"/><polygon points="711.5,101.2 721.5,95.8 741.0,124.2 728.2,133.2 717.8,116.2 720.2,113.8"/><polygon points="709.0,196.2 716.5,189.5 721.5,193.0 725.2,188.0 748.5,203.8 736.5,221.2 731.5,218.0 724.0,226.2 706.5,215.0 714.0,203.8"/><polygon points="30.8,380.5 42.5,377.5 53.0,416.8 43.0,419.8 38.0,399.2 35.0,398.5"/><polygon points="83.8,366.8 97.0,364.2 113.8,425.5 97.5,431.0 88.8,403.0 94.5,401.0 93.0,391.0 90.0,391.0"/><polygon points="482.2,372.5 486.8,369.2 485.5,364.2 508.8,348.0 516.2,358.0 487.2,379.8"/><polygon points="725.8,308.5 730.8,301.8 754.5,316.0 749.8,323.8"/><polygon points="520.5,295.0 533.5,283.5 574.0,326.8 606.5,361.8 592.8,386.8 627.2,406.0 614.0,432.5 582.8,416.0 585.2,411.8 580.2,406.0 576.5,408.0 575.5,406.8 531.8,313.0 528.5,314.2 530.5,308.0"/><polygon points="352.5,589.8 376.0,563.0 392.2,578.0 381.8,590.5 372.5,582.2 362.5,595.5 356.8,594.8"/><polygon points="652.0,641.0 686.5,641.5 685.2,654.8 670.2,655.5 670.2,657.2 662.8,658.0 661.5,659.0 652.8,658.0"/><polygon points="796.0,578.5 807.8,574.0 814.8,591.8 809.5,593.5 821.0,621.0 814.0,624.0"/><polygon points="821.0,567.2 831.5,564.0 838.5,581.0 835.2,583.0 844.0,602.2 836.5,605.5"/><polygon points="106.8,717.8 123.0,706.0 135.0,722.8 132.5,727.0 127.5,727.8 127.5,730.2 135.0,737.8 122.5,747.8 113.8,736.5 117.5,732.8"/><polygon points="647.8,742.0 664.5,744.0 664.0,754.0 667.0,754.5 667.0,757.0 682.8,760.2 680.2,773.5 644.0,764.5"/><polygon points="299.2,520.4 311.8,506.8 323.4,516.9 305.5,539.3 306.0,542.0 300.3,548.7 294.4,544.1 298.0,539.9 295.9,535.1 303.9,525.2 303.9,524.0"/><polygon points="629.0,259.2 632.8,254.2 639.5,251.8 652.8,258.0 677.8,285.5 677.0,288.0 692.0,298.0 682.8,315.5 666.0,305.5 667.0,302.5 630.2,264.2"/><polygon points="515.0,98.8 520.5,96.2 524.2,101.2 545.5,89.5 551.8,102.5 535.5,111.8 530.5,105.0 518.0,105.5"/><polygon points="685.2,113.8 691.5,110.0 712.2,143.8 705.2,149.2 695.2,130.0 697.0,128.0"/><polygon points="624.0,148.8 630.2,145.0 634.0,151.2 637.0,150.0 654.0,178.8 640.2,188.8 632.8,175.0 634.0,172.5 625.2,157.5 627.0,155.5"/><polygon points="722.0,166.2 731.5,160.5 743.2,175.0 734.8,185.5"/><polygon points="794.0,-2.5 814.0,-2.5 820.2,5.0 805.2,11.2"/><polygon points="370.0,336.0 374.2,333.0 380.5,340.5 384.2,338.0 393.5,351.8 383.0,359.2"/><polygon points="20.5,503.0 38.8,488.0 48.2,497.2 30.0,513.0"/><polygon points="208.2,513.0 213.2,507.8 247.5,532.2 240.5,542.8 226.2,533.5 225.0,528.5"/><polygon points="212.0,622.2 218.2,615.5 253.0,641.0 247.5,648.0 226.2,634.0"/><polygon points="-2.5,616.5 9.5,621.0 2.5,642.2 -2.5,641.0"/><polygon points="330.5,637.2 336.0,634.2 341.8,642.2 345.0,640.5 357.5,656.0 348.0,663.5"/><polygon points="517.5,662.2 533.0,633.5 538.0,630.5 597.8,642.2 596.5,667.2 561.8,659.0 560.5,669.8 553.0,671.5 551.8,668.5 545.5,671.0 544.2,668.5 539.2,676.0"/><polygon points="592.0,525.5 597.0,518.5 620.2,522.2 621.5,524.0 629.5,523.5 628.5,533.5 611.5,530.5 611.5,528.5"/><polygon points="654.0,606.8 656.5,602.2 666.5,600.5 667.0,598.0 674.0,597.2 674.5,594.8 680.2,593.5 679.0,588.5 689.5,584.0 697.0,597.2 659.0,613.5"/><polygon points="123.8,705.2 135.0,696.5 145.0,709.0 143.8,712.8 151.2,722.8 140.0,730.2 135.0,724.0"/><polygon points="134.2,764.0 148.8,753.5 156.2,765.2 165.0,780.2 146.2,794.0 140.0,792.8"/><polygon points="294.4,662.5 300.7,659.0 309.1,671.5 313.3,668.8 323.8,682.4 313.7,689.4"/><polygon points="635.5,-4.0 640.3,14.3 649.0,29.5 665.8,19.9 657.0,5.6 653.8,6.4 650.0,-4.0"/><polygon points="653.0,45.4 665.0,39.0 672.9,55.0 671.3,55.8 677.7,65.3 669.0,71.4"/><polygon points="437.2,653.5 444.2,644.0 483.0,643.0 485.5,647.2 469.8,674.8"/><polygon points="486.8,72.5 511.8,60.0 513.5,62.5 528.0,55.5 534.2,67.5 513.0,78.8 510.5,75.0 490.5,82.5"/><polygon points="471.8,-1.2 476.0,-1.2 474.2,0.8"/><polygon points="52.5,314.2 58.8,311.8 59.2,309.2 63.8,308.5 70.0,334.2 58.8,337.2"/><polygon points="456.2,341.8 460.5,338.0 459.2,335.5 483.0,317.2 489.2,319.2 498.8,334.2 481.8,347.5 479.2,344.2 466.8,354.2"/><polygon points="456.2,341.8 460.5,338.0 459.2,335.5 475.0,324.2 484.2,340.5 481.8,347.5 479.2,344.2 466.8,354.2"/><polygon points="533.5,281.8 552.5,266.0 566.8,281.8 564.2,286.8 572.2,295.5 558.0,308.0"/><polygon points="669.5,238.5 675.2,231.8 717.0,257.5 709.0,270.5 680.2,251.8 673.5,249.2"/><polygon points="663.5,266.8 669.0,260.5 702.8,281.0 696.5,291.8 679.0,281.8"/><polygon points="711.0,334.2 718.5,322.5 746.5,339.2 764.0,349.2 783.5,367.5 780.2,373.0 773.5,375.5 759.0,363.0 741.0,348.0 728.5,343.5"/><polygon points="662.0,420.5 683.5,433.5 684.0,443.5 689.5,443.5 693.5,437.5 704.0,444.2 703.5,448.0 710.2,447.5 709.0,456.8 661.0,456.8"/><polygon points="-2.5,507.2 2.0,511.0 -2.5,514.0"/><polygon points="7.0,552.2 23.8,539.2 30.5,547.8 11.2,562.2 12.5,564.8 2.5,571.5 -2.5,567.2"/><polygon points="89.5,584.0 117.0,561.5 120.5,565.5 107.0,578.5 110.0,584.0 97.0,594.0"/><polygon points="131.8,603.5 137.5,599.0 158.0,618.5 160.8,616.0 173.8,628.0 165.0,637.2 150.0,624.0"/><polygon points="203.8,634.8 212.0,626.0 225.8,634.8 219.5,645.2"/><polygon points="323.5,642.2 330.5,637.2 348.0,663.5 339.2,670.5 328.0,653.5 330.0,651.5"/><polygon points="656.0,546.5 674.0,547.2 698.5,536.8 701.0,542.2 679.0,552.2 677.8,556.0 686.5,555.5 689.0,564.0 676.5,568.5 656.0,567.2"/><polygon points="727.8,611.0 746.5,604.0 752.8,621.0 735.2,628.0"/><polygon points="844.0,558.5 857.8,552.8 870.2,583.5 859.0,588.5 861.5,596.0 850.2,600.5 842.0,581.0 850.2,577.8"/><polygon points="598.2,663.5 611.5,663.0 611.5,661.0 625.2,661.0 625.2,689.5 599.0,689.5"/><polygon points="263.5,250.2 283.0,245.9 291.0,240.6 303.8,260.5 301.5,261.3 303.8,272.8 308.8,272.5 311.8,291.3 299.2,293.6 292.2,259.0 266.9,264.4"/><polygon points="295.3,213.7 310.7,207.5 314.5,214.4 318.4,213.7 325.3,226.7 321.4,229.0 329.1,242.9 315.3,249.8 309.1,237.5 306.1,238.7 299.2,222.9"/><polygon points="72.3,642.1 80.7,635.8 85.9,642.7 82.2,646.3 85.9,651.7 90.6,649.0 98.5,660.5 103.8,657.4 118.4,675.2 105.9,685.7 92.2,667.8 90.5,669.0"/><polygon points="237.8,679.3 246.2,664.6 251.4,662.5 257.7,653.1 265.1,657.3 260.9,664.6 267.8,670.9 263.0,681.4 256.7,679.3 252.5,687.7"/><polygon points="426.5,679.3 431.7,673.0 437.0,676.6 439.1,674.5 442.2,680.3 459.0,691.9 452.3,703.4 439.1,695.0 437.0,690.8 431.7,688.7"/></g>
<g fill="none" stroke="#c4c7d6" stroke-width="0.8" stroke-dasharray="1.5 1.2"><polyline points="0.0,110.0 21.2,101.2"/><polyline points="26.2,101.2 93.8,155.0 111.2,122.5 107.5,100.0"/><polyline points="619.0,456.0 641.5,471.0 650.2,489.8"/><polyline points="631.5,642.2 642.8,643.0"/><polyline points="325.5,704.0 348.0,744.0"/><polyline points="800.7,134.9 744.2,228.0 611.8,448.0 583.0,499.8 494.5,641.0 472.0,683.8 404.5,797.0 397.0,811.0"/><polyline points="821.7,134.9 765.2,228.0 632.8,448.0 604.0,499.8 515.5,641.0 493.0,683.8 425.5,797.0 418.0,811.0"/></g>
<g fill="none" stroke="#fff" stroke-linejoin="round" stroke-linecap="butt">
<polyline stroke-width="4.05" points="147.5,47.5 173.8,81.2 178.8,101.2 175.0,125.0 165.0,161.2"/>
<polyline stroke-width="4.50" points="52.5,16.2 107.5,100.0"/>
<polyline stroke-width="4.50" points="521.8,0.0 565.5,85.0"/>
<polyline stroke-width="4.50" points="564.2,86.2 595.8,68.8"/>
<polyline stroke-width="4.50" points="747.8,46.2 767.8,38.8"/>
<polyline stroke-width="4.50" points="767.8,38.8 794.0,81.2"/>
<polyline stroke-width="4.50" points="839.0,100.0 859.0,115.0 871.8,140.0"/>
<polyline stroke-width="4.50" points="832.8,117.5 871.8,145.0"/>
<polyline stroke-width="4.50" points="138.8,344.2 147.5,384.2 160.0,411.8 173.0,436.0 190.8,455.8 200.8,471.0"/>
<polyline stroke-width="4.50" points="222.5,323.0 250.0,388.0 277.5,455.8"/>
<polyline stroke-width="4.50" points="443.0,276.8 476.8,258.0"/>
<polyline stroke-width="4.50" points="277.5,456.0 282.5,464.8 297.8,481.0"/>
<polyline stroke-width="4.50" points="368.0,786.5 375.5,797.0 383.0,809.0"/>
<polyline stroke-width="4.50" points="624.0,792.8 644.0,797.0"/>
<polyline stroke-width="4.50" points="329.9,204.4 345.3,239.0 311.5,255.9 332.2,294.4"/>
<polyline stroke-width="4.50" points="546.7,390.6 502.8,424.0 523.9,471.4 532.7,480.1 548.5,487.2 560.8,476.6 527.4,408.1"/>
<polyline stroke-width="4.95" points="290.5,-5.0 385.5,115.0 460.5,227.8 472.5,246.2"/>
<polyline stroke-width="4.95" points="569.0,84.0 716.5,2.5 721.5,0.0"/>
<polyline stroke-width="4.95" points="717.8,0.0 779.0,105.0"/>
<polyline stroke-width="4.95" points="651.5,491.0 645.2,631.0 641.5,683.8 640.2,721.5 621.5,797.0 619.0,806.0"/>
<polyline stroke-width="4.95" points="-10.0,645.5 0.0,655.3 73.4,727.6"/>
<polyline stroke-width="5.40" points="21.2,101.2 233.8,0.0 240.0,-3.0"/>
<polyline stroke-width="5.40" points="298.0,304.2 358.0,290.5 378.0,288.0 396.8,291.8 434.2,334.2"/>
<polyline stroke-width="5.40" points="459.8,228.0 498.0,286.8 548.0,390.5 565.5,425.5 595.8,440.5 620.5,455.0"/>
<polyline stroke-width="5.40" points="574.0,239.2 599.0,225.0"/>
<polyline stroke-width="5.40" points="-5.0,486.5 53.8,556.0 92.5,603.5 151.2,663.5"/>
<polyline stroke-width="5.40" points="163.8,658.0 212.5,684.0"/>
<polyline stroke-width="5.40" points="300.5,478.5 358.0,531.0 443.0,608.5 503.0,642.2"/>
<polyline stroke-width="5.40" points="443.0,608.5 358.0,676.0 285.0,726.5"/>
<polyline stroke-width="5.40" points="646.5,628.5 769.0,578.5 871.8,533.5 881.5,529.2"/>
<polyline stroke-width="5.40" points="212.5,684.0 252.5,699.0 285.0,726.5"/>
<polyline stroke-width="5.40" points="310.0,706.5 285.0,726.5 225.0,769.0 190.0,797.0 175.0,809.0"/>
<polyline stroke-width="5.40" points="824.0,797.0 871.8,780.2 886.5,775.2"/>
<polyline stroke-width="5.40" points="-7.5,794.8 0.0,788.8 75.0,727.5 127.5,683.8 162.5,656.0 195.0,626.0 250.0,551.0 297.8,483.5 315.5,455.8 375.5,388.0 433.0,335.5 498.0,285.5 520.0,271.8 560.0,246.6 603.4,221.8 675.2,183.0 720.0,154.0 757.0,127.4 780.2,108.2 783.0,105.0"/>
<polyline stroke-width="6.30" points="-5.0,379.2 100.0,350.5 220.0,321.8 297.8,304.2"/>
<polyline stroke-width="9.00" points="830.0,104.0 811.7,134.9 755.2,228.0 622.8,448.0 594.0,499.8 505.5,641.0 483.0,683.8 415.5,797.0 408.0,811.0"/>
<polyline stroke-width="20" points="893.0,-9.0 850.7,60.4 832.0,91.1 820.5,113.0"/>
<polygon stroke="none" fill="#fff" points="812.3,107.1 829.7,116.9 810.1,146.2 802.3,141.8"/>
<polyline stroke-width="5" points="841.0,100.0 857.7,115.3 876.0,144.0"/>
<polyline stroke-width="5" points="832.0,116.0 876.0,146.0"/>
<polyline stroke="#e6e3d2" stroke-width="1.4" stroke-dasharray="14 3" points="893.0,-9.0 850.7,60.4 832.0,91.1 813.0,127.0"/>
</g>
<g stroke="#fff" stroke-width="1" shape-rendering="crispEdges"><line x1="152.5" y1="0" x2="152.5" y2="797"/><line x1="357.5" y1="0" x2="357.5" y2="797"/><line x1="562.5" y1="0" x2="562.5" y2="797"/><line x1="767.5" y1="0" x2="767.5" y2="797"/><line x1="0" y1="147.5" x2="872" y2="147.5"/><line x1="0" y1="352.5" x2="872" y2="352.5"/><line x1="0" y1="556.5" x2="872" y2="556.5"/><line x1="0" y1="761.5" x2="872" y2="761.5"/></g>
<g font-size="9.9" fill="#2e2e2e" stroke="#f4f2e4" stroke-width="2.6" paint-order="stroke" stroke-linejoin="round" text-anchor="middle">
<text transform="translate(181.0 29.0) rotate(-27)" y="3.6">Hoogstraat</text>
<text transform="translate(408.0 147.5) rotate(57)" y="3.6">Engerstraat</text>
<text transform="translate(537.0 32.5) rotate(63)" y="3.6">Kampstraat</text>
<text transform="translate(688.0 19.0) rotate(-29)" y="3.6">Kampstraat</text>
<text transform="translate(674.0 184.0) rotate(-33)" y="3.6">Posthuisstraat</text>
<text transform="translate(815.0 134.0) rotate(-60)" y="3.6">Grotestraat</text>
<text transform="translate(161.0 412.0) rotate(65)" y="3.6">Koningstraat</text>
<text transform="translate(337.0 299.0) rotate(-10)" y="3.6">Koningstraat</text>
<text transform="translate(358.0 408.0) rotate(-48)" y="3.6">Bergstraat</text>
<text transform="translate(513.0 317.0) rotate(62)" y="3.6">Engerstraat</text>
<text transform="translate(711.0 305.0) rotate(-58)" y="3.6">Grotestraat</text>
<text transform="translate(37.0 535.5) rotate(50)" y="3.6">Zandstraat</text>
<text transform="translate(239.0 569.0) rotate(-55)" y="3.6">Bergstraat</text>
<text transform="translate(23.0 673.0) rotate(42)" y="3.6">Houtstraat</text>
<text transform="translate(226.0 686.0) rotate(22)" y="3.6">Tabakstraat</text>
<text transform="translate(328.0 503.5) rotate(43)" y="3.6">Sint Josephstraat</text>
<text transform="translate(586.0 631.0) rotate(10)" y="3.6">Jac. Bongaertsstraat</text>
<text transform="translate(485.4 686.0) rotate(-58)" y="3.6">Roermondseweg</text>
<text transform="translate(326.0 698.0) rotate(-35)" y="3.6">Paul Guillaumestraat</text>
<text transform="translate(648.0 578.5) rotate(-88)" y="3.6">Spoorstraat</text>
<text transform="translate(818.0 558.5) rotate(-22)" y="3.6">Schoolstraat</text>
<text transform="translate(99.0 711.0) rotate(-38)" y="3.6">Bergstraat</text>
<text transform="translate(360.5 765.0) rotate(65)" y="3.6">Muldershof</text>
<text transform="translate(626.0 778.0) rotate(-78)" y="3.6">Spoorstraat</text>
<text transform="translate(826.0 7.0) rotate(-24)" y="3.6">Smidsstraat</text>
<text transform="translate(876.0 142.0) rotate(64)" y="3.6">Gasstraat</text>
<text transform="translate(182.0 797.0) rotate(-30)" y="3.6">Tabakstraat</text>
</g>
<text x="820" y="78.5" font-size="13.5" fill="#444" stroke="#f4f2e4" stroke-width="2.6" paint-order="stroke" text-anchor="middle">Tegelen</text>
<g font-size="11" font-weight="bold" fill="#1f4fa0" stroke="#fff" stroke-width="2.4" paint-order="stroke" text-anchor="middle">
<text x="783" y="66">P</text>
<text x="439.5" y="286.5">P</text>
<text x="530.5" y="451.5">P</text>
</g>
<g font-size="9.5" fill="#1a73e8" stroke="#fff" stroke-width="2.4" paint-order="stroke" text-anchor="middle">
<text x="638" y="453.9">Plein 1817</text>
<text x="531" y="464.9">Plein 1817</text>
<text x="584" y="501.4">Plein 1817</text>
<text x="849" y="46" text-anchor="start" font-weight="bold">Wilhelmina</text>
</g>
<g transform="translate(633.5 432.0)"><rect x="0" y="0" width="9" height="8.6" rx="1.8" fill="#1a73e8" stroke="#fff" stroke-width=".8"/><rect x="1.5" y="1.6" width="6" height="3" fill="#fff"/><rect x="1.2" y="8.4" width="1.6" height="1.6" fill="#1a73e8"/><rect x="6.2" y="8.4" width="1.6" height="1.6" fill="#1a73e8"/><circle cx="2.3" cy="6.5" r=".8" fill="#fff"/><circle cx="6.7" cy="6.5" r=".8" fill="#fff"/></g>
<g transform="translate(579.5 479.0)"><rect x="0" y="0" width="9" height="8.6" rx="1.8" fill="#1a73e8" stroke="#fff" stroke-width=".8"/><rect x="1.5" y="1.6" width="6" height="3" fill="#fff"/><rect x="1.2" y="8.4" width="1.6" height="1.6" fill="#1a73e8"/><rect x="6.2" y="8.4" width="1.6" height="1.6" fill="#1a73e8"/><circle cx="2.3" cy="6.5" r=".8" fill="#fff"/><circle cx="6.7" cy="6.5" r=".8" fill="#fff"/></g>
<g font-size="9.5" fill="#8d6e63" stroke="#fff" stroke-width="2.2" paint-order="stroke" text-anchor="middle">
<text x="771.5" y="173.4">Grand Cagé</text>
<text x="771.5" y="184.4">Staccato</text>
<text x="576" y="583.9">Gonzobar</text>
</g>
<g transform="translate(772 155)" stroke="#fff" stroke-width=".8" paint-order="stroke"><path d="M-4.6,-5.5 L4.6,-5.5 L0.6,0 L0.6,4.2 L2.8,5.4 L-2.8,5.4 L-0.6,4.2 L-0.6,0 Z" fill="#8d6e63"/></g>
<g transform="translate(575.5 567)"><path d="M-3.6,-2.6 h6.2 v5.6 a1.8,1.8 0 0 1 -1.8,1.8 h-2.6 a1.8,1.8 0 0 1 -1.8,-1.8 z" fill="#8d6e63" stroke="#fff" stroke-width=".7" paint-order="stroke"/><path d="M2.6,-1 h1.3 a.8,.8 0 0 1 .8,.8 v1.6 a.8,.8 0 0 1 -.8,.8 h-1.3" fill="none" stroke="#8d6e63" stroke-width="1"/><path d="M-3.4,-3.6 q1.6,-1.6 3,0 q1.6,-1.4 3,0 v1 h-6z" fill="#a58a80" stroke="#fff" stroke-width=".5" paint-order="stroke"/></g>
<g font-size="9.5" fill="#2a9d9a" stroke="#fff" stroke-width="2.2" paint-order="stroke" text-anchor="middle">
<text x="484" y="566.9">Basisschool</text>
<text x="484" y="578.4">Sint Jozef</text>
</g>
<g transform="translate(483.5 549)" fill="#2a9d9a" stroke="#fff" stroke-width=".5"><rect x="-4.2" y="-5" width="3.4" height="10" rx=".8"/><rect x=".8" y="-5" width="3.4" height="10" rx=".8"/></g>
<path transform="translate(566.9 85.3) rotate(-29)" d="M-4,0 H4 M1,-2.5 L4,0 L1,2.5" fill="none" stroke="#b9bcc0" stroke-width="1"/>
<path transform="translate(620.0 54.0) rotate(-29)" d="M-4,0 H4 M1,-2.5 L4,0 L1,2.5" fill="none" stroke="#b9bcc0" stroke-width="1"/>
<path transform="translate(747.0 45.0) rotate(-118)" d="M-4,0 H4 M1,-2.5 L4,0 L1,2.5" fill="none" stroke="#b9bcc0" stroke-width="1"/>
<path transform="translate(756.0 126.0) rotate(-33)" d="M-4,0 H4 M1,-2.5 L4,0 L1,2.5" fill="none" stroke="#b9bcc0" stroke-width="1"/>
<path transform="translate(552.0 252.5) rotate(-32)" d="M-4,0 H4 M1,-2.5 L4,0 L1,2.5" fill="none" stroke="#b9bcc0" stroke-width="1"/>
<path transform="translate(242.0 370.0) rotate(-112)" d="M-4,0 H4 M1,-2.5 L4,0 L1,2.5" fill="none" stroke="#b9bcc0" stroke-width="1"/>
<path transform="translate(266.0 427.0) rotate(-112)" d="M-4,0 H4 M1,-2.5 L4,0 L1,2.5" fill="none" stroke="#b9bcc0" stroke-width="1"/>
<path transform="translate(846.0 124.0) rotate(35)" d="M-4,0 H4 M1,-2.5 L4,0 L1,2.5" fill="none" stroke="#b9bcc0" stroke-width="1"/>
<path transform="translate(603.4 221.8) rotate(-30)" d="M-4,0 H4 M1,-2.5 L4,0 L1,2.5" fill="none" stroke="#b9bcc0" stroke-width="1"/>
<g fill="#efb12f" fill-opacity="0.2" stroke="#efb12f" stroke-width="2.3" stroke-linejoin="round"><polygon points="486.8,72.5 511.8,60.0 513.5,62.5 528.0,55.5 534.2,67.5 513.0,78.8 510.5,75.0 490.5,82.5"/><polygon points="471.8,-1.2 476.0,-1.2 474.2,0.8"/><polygon points="52.5,314.2 58.8,311.8 59.2,309.2 63.8,308.5 70.0,334.2 58.8,337.2"/><polygon points="456.2,341.8 460.5,338.0 459.2,335.5 483.0,317.2 489.2,319.2 498.8,334.2 481.8,347.5 479.2,344.2 466.8,354.2"/><polygon points="456.2,341.8 460.5,338.0 459.2,335.5 475.0,324.2 484.2,340.5 481.8,347.5 479.2,344.2 466.8,354.2"/><polygon points="533.5,281.8 552.5,266.0 566.8,281.8 564.2,286.8 572.2,295.5 558.0,308.0"/><polygon points="669.5,238.5 675.2,231.8 717.0,257.5 709.0,270.5 680.2,251.8 673.5,249.2"/><polygon points="663.5,266.8 669.0,260.5 702.8,281.0 696.5,291.8 679.0,281.8"/><polygon points="711.0,334.2 718.5,322.5 746.5,339.2 764.0,349.2 783.5,367.5 780.2,373.0 773.5,375.5 759.0,363.0 741.0,348.0 728.5,343.5"/><polygon points="662.0,420.5 683.5,433.5 684.0,443.5 689.5,443.5 693.5,437.5 704.0,444.2 703.5,448.0 710.2,447.5 709.0,456.8 661.0,456.8"/><polygon points="-2.5,507.2 2.0,511.0 -2.5,514.0"/><polygon points="7.0,552.2 23.8,539.2 30.5,547.8 11.2,562.2 12.5,564.8 2.5,571.5 -2.5,567.2"/><polygon points="89.5,584.0 117.0,561.5 120.5,565.5 107.0,578.5 110.0,584.0 97.0,594.0"/><polygon points="131.8,603.5 137.5,599.0 158.0,618.5 160.8,616.0 173.8,628.0 165.0,637.2 150.0,624.0"/><polygon points="203.8,634.8 212.0,626.0 225.8,634.8 219.5,645.2"/><polygon points="323.5,642.2 330.5,637.2 348.0,663.5 339.2,670.5 328.0,653.5 330.0,651.5"/><polygon points="656.0,546.5 674.0,547.2 698.5,536.8 701.0,542.2 679.0,552.2 677.8,556.0 686.5,555.5 689.0,564.0 676.5,568.5 656.0,567.2"/><polygon points="727.8,611.0 746.5,604.0 752.8,621.0 735.2,628.0"/><polygon points="844.0,558.5 857.8,552.8 870.2,583.5 859.0,588.5 861.5,596.0 850.2,600.5 842.0,581.0 850.2,577.8"/><polygon points="598.2,663.5 611.5,663.0 611.5,661.0 625.2,661.0 625.2,689.5 599.0,689.5"/><polygon points="263.5,250.2 283.0,245.9 291.0,240.6 303.8,260.5 301.5,261.3 303.8,272.8 308.8,272.5 311.8,291.3 299.2,293.6 292.2,259.0 266.9,264.4"/><polygon points="295.3,213.7 310.7,207.5 314.5,214.4 318.4,213.7 325.3,226.7 321.4,229.0 329.1,242.9 315.3,249.8 309.1,237.5 306.1,238.7 299.2,222.9"/><polygon points="72.3,642.1 80.7,635.8 85.9,642.7 82.2,646.3 85.9,651.7 90.6,649.0 98.5,660.5 103.8,657.4 118.4,675.2 105.9,685.7 92.2,667.8 90.5,669.0"/><polygon points="237.8,679.3 246.2,664.6 251.4,662.5 257.7,653.1 265.1,657.3 260.9,664.6 267.8,670.9 263.0,681.4 256.7,679.3 252.5,687.7"/><polygon points="426.5,679.3 431.7,673.0 437.0,676.6 439.1,674.5 442.2,680.3 459.0,691.9 452.3,703.4 439.1,695.0 437.0,690.8 431.7,688.7"/></g>
<g fill="#d96f2a" fill-opacity="0.2" stroke="#d96f2a" stroke-width="2.3" stroke-linejoin="round"><polygon points="515.0,98.8 520.5,96.2 524.2,101.2 545.5,89.5 551.8,102.5 535.5,111.8 530.5,105.0 518.0,105.5"/><polygon points="685.2,113.8 691.5,110.0 712.2,143.8 705.2,149.2 695.2,130.0 697.0,128.0"/><polygon points="624.0,148.8 630.2,145.0 634.0,151.2 637.0,150.0 654.0,178.8 640.2,188.8 632.8,175.0 634.0,172.5 625.2,157.5 627.0,155.5"/><polygon points="722.0,166.2 731.5,160.5 743.2,175.0 734.8,185.5"/><polygon points="794.0,-2.5 814.0,-2.5 820.2,5.0 805.2,11.2"/><polygon points="370.0,336.0 374.2,333.0 380.5,340.5 384.2,338.0 393.5,351.8 383.0,359.2"/><polygon points="20.5,503.0 38.8,488.0 48.2,497.2 30.0,513.0"/><polygon points="208.2,513.0 213.2,507.8 247.5,532.2 240.5,542.8 226.2,533.5 225.0,528.5"/><polygon points="212.0,622.2 218.2,615.5 253.0,641.0 247.5,648.0 226.2,634.0"/><polygon points="-2.5,616.5 9.5,621.0 2.5,642.2 -2.5,641.0"/><polygon points="330.5,637.2 336.0,634.2 341.8,642.2 345.0,640.5 357.5,656.0 348.0,663.5"/><polygon points="517.5,662.2 533.0,633.5 538.0,630.5 597.8,642.2 596.5,667.2 561.8,659.0 560.5,669.8 553.0,671.5 551.8,668.5 545.5,671.0 544.2,668.5 539.2,676.0"/><polygon points="592.0,525.5 597.0,518.5 620.2,522.2 621.5,524.0 629.5,523.5 628.5,533.5 611.5,530.5 611.5,528.5"/><polygon points="654.0,606.8 656.5,602.2 666.5,600.5 667.0,598.0 674.0,597.2 674.5,594.8 680.2,593.5 679.0,588.5 689.5,584.0 697.0,597.2 659.0,613.5"/><polygon points="123.8,705.2 135.0,696.5 145.0,709.0 143.8,712.8 151.2,722.8 140.0,730.2 135.0,724.0"/><polygon points="134.2,764.0 148.8,753.5 156.2,765.2 165.0,780.2 146.2,794.0 140.0,792.8"/><polygon points="294.4,662.5 300.7,659.0 309.1,671.5 313.3,668.8 323.8,682.4 313.7,689.4"/><polygon points="635.5,-4.0 640.3,14.3 649.0,29.5 665.8,19.9 657.0,5.6 653.8,6.4 650.0,-4.0"/><polygon points="653.0,45.4 665.0,39.0 672.9,55.0 671.3,55.8 677.7,65.3 669.0,71.4"/></g>
<g fill="#d96f2a" fill-opacity="0.44" stroke="#d96f2a" stroke-width="2.3" stroke-linejoin="round"><polygon points="437.2,653.5 444.2,644.0 483.0,643.0 485.5,647.2 469.8,674.8"/></g>
<g fill="#c9202a" fill-opacity="0.2" stroke="#c9202a" stroke-width="2.3" stroke-linejoin="round"><polygon points="431.0,166.2 446.8,157.0 448.8,160.0 462.5,152.0 469.2,163.8 456.0,171.8 457.2,174.2 441.8,183.2"/><polygon points="662.0,8.8 674.0,2.5 675.2,0.0 704.0,0.0 669.0,18.0"/><polygon points="576.0,45.0 582.0,41.2 585.2,47.5 590.2,45.5 597.8,60.0 587.8,66.2"/><polygon points="711.5,101.2 721.5,95.8 741.0,124.2 728.2,133.2 717.8,116.2 720.2,113.8"/><polygon points="709.0,196.2 716.5,189.5 721.5,193.0 725.2,188.0 748.5,203.8 736.5,221.2 731.5,218.0 724.0,226.2 706.5,215.0 714.0,203.8"/><polygon points="30.8,380.5 42.5,377.5 53.0,416.8 43.0,419.8 38.0,399.2 35.0,398.5"/><polygon points="83.8,366.8 97.0,364.2 113.8,425.5 97.5,431.0 88.8,403.0 94.5,401.0 93.0,391.0 90.0,391.0"/><polygon points="482.2,372.5 486.8,369.2 485.5,364.2 508.8,348.0 516.2,358.0 487.2,379.8"/><polygon points="725.8,308.5 730.8,301.8 754.5,316.0 749.8,323.8"/><polygon points="520.5,295.0 533.5,283.5 574.0,326.8 606.5,361.8 592.8,386.8 627.2,406.0 614.0,432.5 582.8,416.0 585.2,411.8 580.2,406.0 576.5,408.0 575.5,406.8 531.8,313.0 528.5,314.2 530.5,308.0"/><polygon points="352.5,589.8 376.0,563.0 392.2,578.0 381.8,590.5 372.5,582.2 362.5,595.5 356.8,594.8"/><polygon points="652.0,641.0 686.5,641.5 685.2,654.8 670.2,655.5 670.2,657.2 662.8,658.0 661.5,659.0 652.8,658.0"/><polygon points="796.0,578.5 807.8,574.0 814.8,591.8 809.5,593.5 821.0,621.0 814.0,624.0"/><polygon points="821.0,567.2 831.5,564.0 838.5,581.0 835.2,583.0 844.0,602.2 836.5,605.5"/><polygon points="106.8,717.8 123.0,706.0 135.0,722.8 132.5,727.0 127.5,727.8 127.5,730.2 135.0,737.8 122.5,747.8 113.8,736.5 117.5,732.8"/><polygon points="647.8,742.0 664.5,744.0 664.0,754.0 667.0,754.5 667.0,757.0 682.8,760.2 680.2,773.5 644.0,764.5"/><polygon points="299.2,520.4 311.8,506.8 323.4,516.9 305.5,539.3 306.0,542.0 300.3,548.7 294.4,544.1 298.0,539.9 295.9,535.1 303.9,525.2 303.9,524.0"/></g>
<g fill="#c9202a" fill-opacity="0.36" stroke="#c9202a" stroke-width="2.3" stroke-linejoin="round"><polygon points="629.0,259.2 632.8,254.2 639.5,251.8 652.8,258.0 677.8,285.5 677.0,288.0 692.0,298.0 682.8,315.5 666.0,305.5 667.0,302.5 630.2,264.2"/></g>
</svg>
<!--/MAP-->
  <div id="zoom"><div style="border-bottom:1px solid #c8c8c8;height:23.5px;line-height:27px">+</div><div>&#8722;</div></div>
  <div id="legend"><div style="background:#c9202a">G</div><div style="background:#d96f2a">F</div><div style="background:#efb12f">E</div><div style="background:#fdea2f">D</div><div style="background:#c2d53c">C</div><div style="background:#7ab550">B</div><div style="background:#2ea457;text-align:left;padding-left:5px">A<span style="font-size:9.5px;color:#12652d;letter-spacing:1px;margin-left:1px">++++</span></div></div>
</div>
</body>
</html>
